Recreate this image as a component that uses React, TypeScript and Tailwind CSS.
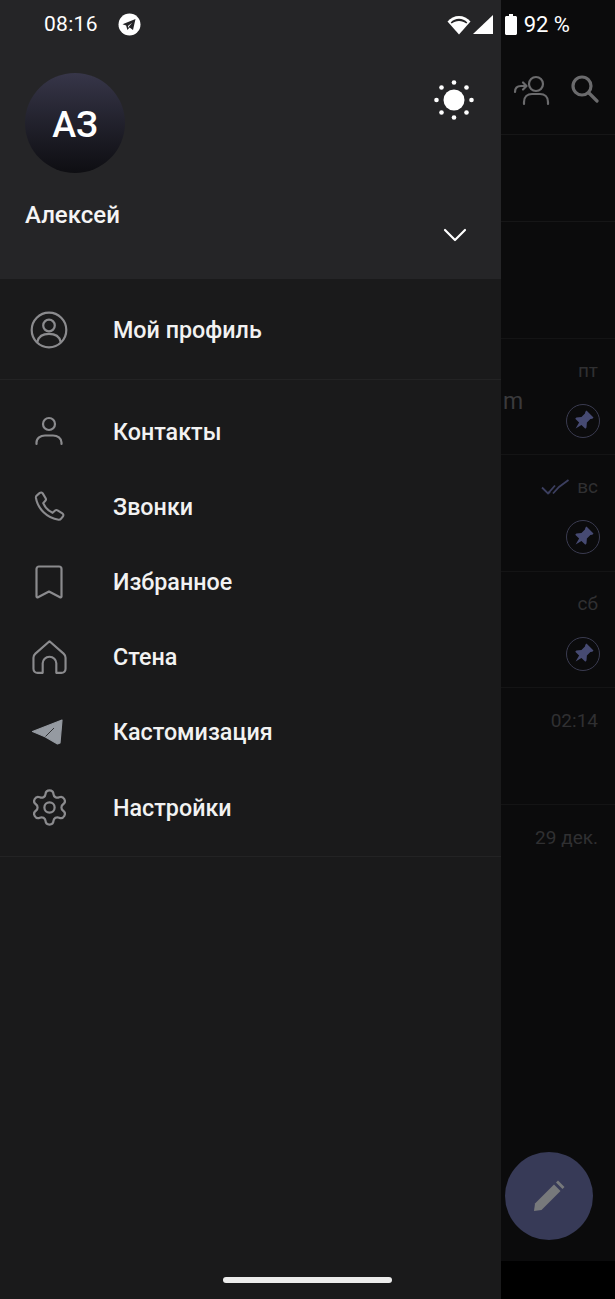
import React from "react";
import { Settings } from "lucide-react";

const iconProps = {
  fill: "none",
  stroke: "currentColor",
  strokeWidth: 2.2,
  strokeLinecap: "round" as const,
  strokeLinejoin: "round" as const,
};

function ProfileIcon() {
  return (
    <svg className="mt-[2px]" width="38" height="38" viewBox="0 0 38 38" {...iconProps}>
      <circle cx="19" cy="19" r="17.3" />
      <circle cx="19" cy="14.5" r="5.8" />
      <path d="M7.5 30.5c1.2-5.2 5.6-7.600 11.500-7.600s10.300 2.400 11.500 7.600" />
    </svg>
  );
}

function ContactsIcon() {
  return (
    <svg className="mt-[1px]" width="28" height="30" viewBox="0 0 28 30" {...iconProps}>
      <circle cx="14" cy="8" r="6" />
      <path d="M1.500 28v-1.500C1.500 22 5.500 19.500 10 19.500h8c4.500 0 8.500 2.500 8.500 7V28" />
    </svg>
  );
}

function PhoneIcon() {
  return (
    <svg className="mt-[1px]" width="31" height="31" viewBox="0 0 32 32" {...iconProps}>
      <path d="M3 4.500 6 2c1-.8 2.300-.6 3 .5l3 5c.5.900.4 1.900-.3 2.600L9.500 12.500c1.800 4.300 5.400 8 9.700 10l2.600-2.300c.7-.6 1.700-.7 2.500-.2l5 3.100c1.100.7 1.300 2 .6 3l-1.900 2.500c-.6.800-1.600 1.200-2.600 1.100C13.500 28 3.800 18.200 2 7.100c-.1-1 .2-2 1-2.600Z" />
    </svg>
  );
}

function BookmarkIcon() {
  return (
    <svg className="mt-[2px]" width="28" height="34" viewBox="0 0 28 34" {...iconProps}>
      <path d="M4 1.500h20c1.400 0 2.500 1.100 2.500 2.500v27.500c0 .8-.8 1.200-1.500.8L14 26.500 3 32.300c-.7.4-1.500 0-1.500-.8V4c0-1.400 1.100-2.500 2.500-2.500Z" />
    </svg>
  );
}

function HomeIcon() {
  return (
    <svg className="mt-[1px]" width="35" height="36" viewBox="0 0 36 36" {...iconProps}>
      <path d="M18 1.800 3.500 14.500c-1.300 1.200-2 2.600-2 4.300V30c0 2.500 1.800 4.300 4.300 4.300H11V24.500c0-3.700 3-6.800 7-6.800s7 3.100 7 6.800v9.800h5.200c2.500 0 4.300-1.800 4.300-4.300V18.800c0-1.700-.7-3.100-2-4.300L18 1.800Z" />
    </svg>
  );
}

function PlaneIcon() {
  return (
    <svg className="mt-[1px] -ml-[4px]" width="32" height="26" viewBox="0 0 32 26">
      <path
        fill="#959aa1"
        stroke="#959aa1"
        strokeWidth="1.200"
        strokeLinejoin="round"
        d="M31 1 1.500 12.500 14 17.700 26.500 25l2.500-1L31 1Z"
      />
      <path d="M14.500 17.500 23 9" stroke="#1a1a1b" strokeWidth="0.800" />
    </svg>
  );
}

const menuItems = [
  { label: "Контакты", icon: <ContactsIcon /> },
  { label: "Звонки", icon: <PhoneIcon /> },
  { label: "Избранное", icon: <BookmarkIcon /> },
  { label: "Стена", icon: <HomeIcon /> },
  { label: "Кастомизация", icon: <PlaneIcon /> },
  { label: "Настройки", icon: <Settings size={41} strokeWidth={1.3} className="mt-[1px]" /> },
];

function MenuRow({ label, icon, className }: { label: string; icon: React.ReactNode; className: string }) {
  return (
    <div className={`flex items-center ${className}`}>
      <div className="flex w-[98px] shrink-0 justify-center text-[#8b8b8e]">{icon}</div>
      <span className="ml-[15px] pt-[3px] text-[23.300px] font-medium text-[#f2f2f2]">{label}</span>
    </div>
  );
}

function SunIcon() {
  const dots = [
    [20, 2.500],
    [20, 37.500],
    [2.500, 20],
    [37.500, 20],
    [7.500, 7.500],
    [32.500, 7.500],
    [7.500, 32.500],
    [32.500, 32.500],
  ];
  return (
    <svg width="40" height="40" viewBox="0 0 40 40" fill="white">
      <circle cx="20" cy="20" r="10.500" />
      {dots.map(([x, y]) => (
        <circle key={`${x}-${y}`} cx={x} cy={y} r="2.300" />
      ))}
    </svg>
  );
}

function StatusBar() {
  return (
    <div className="absolute inset-x-0 top-0 flex h-[49px] items-center text-white">
      <span className="ml-[44px] text-[21px] tracking-[0.3px]">08:16</span>
      <svg className="ml-[20px]" width="23" height="23" viewBox="0 0 23 23">
        <circle cx="11.500" cy="11.500" r="11" fill="white" />
        <path fill="#252527" d="M17.500 6 4.500 11.200l3.600 1.400 1.300 4.400 2.200-2.500 3.400 2.400L17.500 6Zm-7.600 7 4.300-3.300-3.200 3.900-.4 1.500-.7-2.100Z" />
      </svg>
      <svg className="ml-auto" width="24" height="20" viewBox="0 0 24 20">
        <path fill="white" d="M12 19.500.5 6.500C3.500 3 7.500 1 12 1s8.500 2 11.500 5.500L12 19.500Z" />
        <path fill="#252527" d="M12 6c-2.800 0-5.300 1-7.300 2.600l-1-1.200C6 5.200 8.900 3.800 12 3.800s6 1.400 8.300 3.600l-1 1.200C17.300 7 14.800 6 12 6Z" />
      </svg>
      <svg className="ml-[2px]" width="20" height="19" viewBox="0 0 20 19">
        <path fill="white" d="M20 0v19H0L20 0Z" />
      </svg>
      <svg className="ml-[12px]" width="12" height="21" viewBox="0 0 12 21">
        <path fill="white" d="M4 0h4v2h2.500c.8 0 1.500.7 1.500 1.500V19.500c0 .8-.7 1.500-1.500 1.500h-9C.7 21 0 20.300 0 19.500V3.500C0 2.700.7 2 1.500 2H4V0Z" />
      </svg>
      <span className="mr-[45px] ml-[7px] text-[22px]">92 %</span>
    </div>
  );
}

function PinBadge() {
  return (
    <div className="flex h-[34px] w-[34px] items-center justify-center rounded-full border-[1.500px] border-[#3a3b50]">
      <svg width="22" height="22" viewBox="0 0 20 20">
        <g transform="rotate(45 10 10)">
          <path
            fill="#464a72"
            d="M5.500 1h9v1.500l-1 1.500v4.500l3 3.500v1.500h-5L10 19.500 8.500 13.500h-5V12l3-3.500V4l-1-1.500V1Z"
          />
        </g>
      </svg>
    </div>
  );
}

function ChatMeta({ time, pinned, read, className }: { time: string; pinned?: boolean; read?: boolean; className: string }) {
  return (
    <div className={`flex flex-col items-end border-b border-[#141415] pr-[17px] ${className}`}>
      <div className="flex items-center">
        {read && (
          <svg className="mr-[7px]" width="29" height="16" viewBox="0 0 29 16" fill="none" stroke="#3c3f60" strokeWidth="1.800">
            <path d="m1 8.500 6 6L14 6.500" />
            <path d="m12 14.500 6-6.500 9.500-7M7 14.500l2-2" />
          </svg>
        )}
        <span className="text-[19px] leading-[24px] text-[#303032]">{time}</span>
      </div>
      {pinned && (
        <div className="mt-[21px] -mr-[2px]">
          <PinBadge />
        </div>
      )}
    </div>
  );
}

export default function App() {
  return (
    <div className="relative flex h-[1299px] w-[615px] overflow-hidden bg-black font-['Roboto',sans-serif]">
      <aside className="flex w-[501px] shrink-0 flex-col bg-[#1a1a1b]">
        <header className="flex h-[279px] shrink-0 justify-between bg-[#252527] pt-[73px] pr-[27px] pl-[25px]">
          <div>
            <div className="flex h-[100px] w-[100px] items-center justify-center rounded-full bg-gradient-to-b from-[#373649] to-[#0e0e12] pt-[3px] text-[36px] font-medium text-white">
              АЗ
            </div>
            <div className="mt-[24px] text-[24px] font-medium text-[#f5f5f5]">Алексей</div>
          </div>
          <div className="flex flex-col items-center">
            <div className="mt-[7px]">
              <SunIcon />
            </div>
            <svg className="mt-[108px] ml-[2px]" width="24" height="14" viewBox="0 0 24 14" fill="none" stroke="white" strokeWidth="2.200" strokeLinecap="round" strokeLinejoin="round">
              <path d="m2 2 10 10L22 2" />
            </svg>
          </div>
        </header>

        <div className="border-b border-[#232324]">
          <MenuRow label="Мой профиль" icon={<ProfileIcon />} className="h-[100px]" />
        </div>

        <div className="border-b border-[#232324] pt-[13px] pb-[12px]">
          {menuItems.map((item) => (
            <MenuRow key={item.label} label={item.label} icon={item.icon} className="h-[75.200px]" />
          ))}
        </div>
      </aside>

      <main className="relative flex h-[1261px] flex-1 flex-col bg-[#0b0b0c]">
        <div className="flex h-[135px] shrink-0 items-start border-b border-[#161617] pt-[75px] pl-[12px] text-[#6b6b6d]">
          <svg width="38" height="31" viewBox="0 0 38 31" fill="none" stroke="currentColor" strokeWidth="2.200" strokeLinecap="round" strokeLinejoin="round">
            <circle cx="23" cy="9" r="7" />
            <path d="M11 29v-2c0-5 3.500-8 8-8h8c4.500 0 8 3 8 8v2" />
            <path d="M2 17c0-4 2.500-6 6-6h5M10 7.500l3.500 3.500-3.500 3.500" />
          </svg>
          <svg className="ml-[20px]" width="28" height="28" viewBox="0 0 28 28" fill="none" stroke="currentColor" strokeWidth="3.200" strokeLinecap="round">
            <circle cx="11" cy="11" r="9" />
            <path d="m18 18 8 8" />
          </svg>
        </div>
        <div className="h-[87px] shrink-0 border-b border-[#161617]" />
        <div className="h-[117px] shrink-0 border-b border-[#141415]" />
        <div className="relative">
          <span className="absolute top-[48px] left-[2px] text-[23px] leading-[30px] text-[#3a3a3c]">m</span>
          <ChatMeta time="пт" pinned className="h-[116px] pt-[20px]" />
        </div>
        <ChatMeta time="вс" pinned read className="h-[117px] pt-[20px]" />
        <ChatMeta time="сб" pinned className="h-[116px] pt-[20px]" />
        <ChatMeta time="02:14" className="h-[117px] pt-[21px]" />
        <ChatMeta time="29 дек." className="h-[117px] border-b-0 pt-[21px]" />

        <div className="absolute top-[1152px] right-[22px] flex h-[88px] w-[88px] items-center justify-center rounded-full bg-[#373a57]">
          <svg width="32" height="32" viewBox="0 0 32 32">
            <path fill="#77797b" d="M1 31 2 23.500 21 4.500l6.500 6.500-19 19L1 31Z" />
            <path fill="#77797b" d="m23 2.500 2-2 6.500 6.500-2 2L23 2.500Z" />
          </svg>
        </div>
      </main>

      <StatusBar />

      <div className="absolute bottom-[16px] left-[223px] h-[6px] w-[169px] rounded-full bg-[#ececec]" />
    </div>
  );
}
